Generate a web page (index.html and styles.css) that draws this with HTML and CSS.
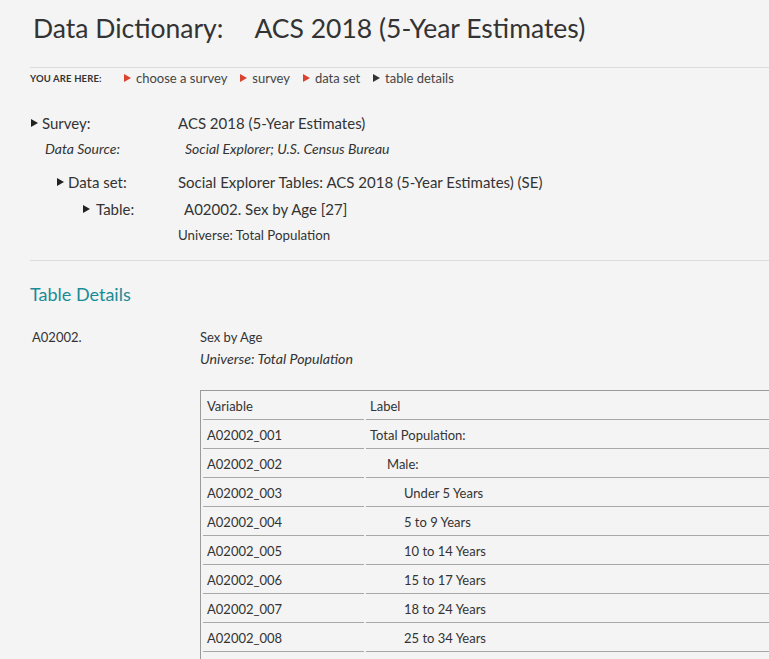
FILE: index.html
```html
<!DOCTYPE html>
<html lang="en">
<head>
<meta charset="utf-8">
<title>Data Dictionary: ACS 2018 (5-Year Estimates)</title>
<link rel="stylesheet" href="styles.css">
</head>
<body>
<div class="page">
  <h1 class="title"><span>Data Dictionary:</span><span class="title-name">ACS 2018 (5-Year Estimates)</span></h1>

  <nav class="crumbs">
    <span class="crumbs-label">YOU ARE HERE:</span>
    <a class="crumb red" href="#">choose a survey</a>
    <a class="crumb red" href="#">survey</a>
    <a class="crumb red" href="#">data set</a>
    <span class="crumb dark">table details</span>
  </nav>

  <section class="meta">
    <div class="meta-row lvl-survey">
      <span class="meta-label tri">Survey:</span>
      <span class="meta-value">ACS 2018 (5-Year Estimates)</span>
    </div>
    <div class="meta-row lvl-source italic">
      <span class="meta-label">Data Source:</span>
      <span class="meta-value">Social Explorer; U.S. Census Bureau</span>
    </div>
    <div class="meta-row lvl-dataset">
      <span class="meta-label tri">Data set:</span>
      <span class="meta-value">Social Explorer Tables: ACS 2018 (5-Year Estimates) (SE)</span>
    </div>
    <div class="meta-row lvl-table">
      <span class="meta-label tri tri-gap">Table:</span>
      <span class="meta-value">A02002. Sex by Age [27]</span>
    </div>
    <div class="meta-row lvl-universe small">
      <span class="meta-value">Universe: Total Population</span>
    </div>
  </section>

  <section class="details">
    <h2 class="details-title">Table Details</h2>
    <div class="details-body">
      <div class="details-code">A02002.</div>
      <div class="details-main">
        <div class="details-name">Sex by Age</div>
        <div class="details-universe">Universe: Total Population</div>
        <div class="vars-wrap">
          <table class="vars">
            <thead>
              <tr><th class="col-var">Variable</th><th>Label</th></tr>
            </thead>
            <tbody>
              <tr><td>A02002_001</td><td>Total Population:</td></tr>
              <tr><td>A02002_002</td><td class="ind1">Male:</td></tr>
              <tr><td>A02002_003</td><td class="ind2">Under 5 Years</td></tr>
              <tr><td>A02002_004</td><td class="ind2">5 to 9 Years</td></tr>
              <tr><td>A02002_005</td><td class="ind2">10 to 14 Years</td></tr>
              <tr><td>A02002_006</td><td class="ind2">15 to 17 Years</td></tr>
              <tr><td>A02002_007</td><td class="ind2">18 to 24 Years</td></tr>
              <tr><td>A02002_008</td><td class="ind2">25 to 34 Years</td></tr>
              <tr><td>A02002_009</td><td class="ind2">35 to 44 Years</td></tr>
            </tbody>
          </table>
        </div>
      </div>
    </div>
  </section>
</div>
</body>
</html>
```

FILE: styles.css
```css
html, body {
  margin: 0;
  padding: 0;
  background: #f4f4f4;
  overflow: hidden;
}

body {
  font-family: "Lato", "Liberation Sans", sans-serif;
  color: #333;
}

.page {
  padding-left: 30px;
}

.title {
  margin: 0;
  padding-top: 9px;
  height: 58px;
  font-weight: 400;
  font-size: 26.5px;
  line-height: 38px;
  color: #333;
  display: flex;
  padding-left: 3px;
  border-bottom: 1px solid #dcdcdc;
}

.title-name {
  margin-left: 31px;
}

.crumbs {
  display: flex;
  align-items: center;
  height: 20px;
  font-size: 13px;
  color: #444;
}

.crumbs-label {
  font-size: 9.5px;
  font-weight: 700;
  letter-spacing: 0.15px;
  color: #333;
  width: 94px;
}

.crumb {
  color: #444;
  text-decoration: none;
  margin-right: 13px;
  display: flex;
  align-items: center;
}

.crumb::before {
  content: "";
  width: 0;
  height: 0;
  border-top: 4px solid transparent;
  border-bottom: 4px solid transparent;
  border-left: 7px solid #d9432f;
  margin-right: 5px;
}

.crumb.dark::before {
  border-left-color: #333;
}

.meta {
  padding-top: 24px;
  padding-bottom: 11px;
  border-bottom: 1px solid #dcdcdc;
  font-size: 15px;
}

.meta-row {
  display: flex;
  align-items: center;
  box-sizing: border-box;
}

.meta-label {
  display: flex;
  align-items: center;
}

.tri::before {
  content: "";
  width: 0;
  height: 0;
  border-top: 4px solid transparent;
  border-bottom: 4px solid transparent;
  border-left: 7px solid #222;
  margin-right: 4px;
}

.tri-gap::before {
  margin-right: 6px;
}

.lvl-survey {
  height: 22px;
  padding-left: 1px;
}
.lvl-survey .meta-label { width: 147px; }

.lvl-source {
  height: 28px;
  padding-left: 15px;
  font-size: 14px;
}
.lvl-source .meta-label { width: 140px; }

.lvl-dataset {
  height: 35px;
  padding-top: 5px;
  padding-left: 27px;
}
.lvl-dataset .meta-label { width: 121px; }

.lvl-table {
  height: 24px;
  padding-left: 53px;
}
.lvl-table .meta-label { width: 101px; }

.lvl-universe {
  height: 28px;
  padding-left: 148px;
}

.small { font-size: 13.3px; }
.italic { font-style: italic; }

.details-title {
  margin: 0;
  padding-top: 21px;
  height: 24px;
  font-size: 18px;
  font-weight: 400;
  line-height: 24px;
  color: #1a8b96;
}

.details-body {
  display: flex;
  font-size: 13px;
  padding-top: 23px;
}

.details-code {
  width: 170px;
  padding-left: 2px;
  line-height: 16px;
}

.details-main {
  flex: 1;
  min-width: 0;
}

.details-name {
  line-height: 16px;
  margin-left: -2px;
}

.details-universe {
  font-style: italic;
  font-size: 14.2px;
  line-height: 16px;
  margin-top: 6px;
  margin-left: -2px;
}

.vars-wrap {
  margin-top: 23px;
  margin-left: -2px;
  overflow: hidden;
}

.vars {
  width: 640px;
  border: 1px solid #9a9a9a;
  border-right: none;
  border-bottom: none;
  border-spacing: 2px;
  font-size: 13px;
  color: #333;
}

.vars th,
.vars td {
  text-align: left;
  font-weight: 400;
  height: 26px;
  padding: 0 0 0 4px;
  border-bottom: 1px solid #a8a8a8;
  white-space: nowrap;
}

.vars .col-var {
  width: 157px;
}

.vars td.ind1 { padding-left: 21px; }
.vars td.ind2 { padding-left: 38px; }
```
